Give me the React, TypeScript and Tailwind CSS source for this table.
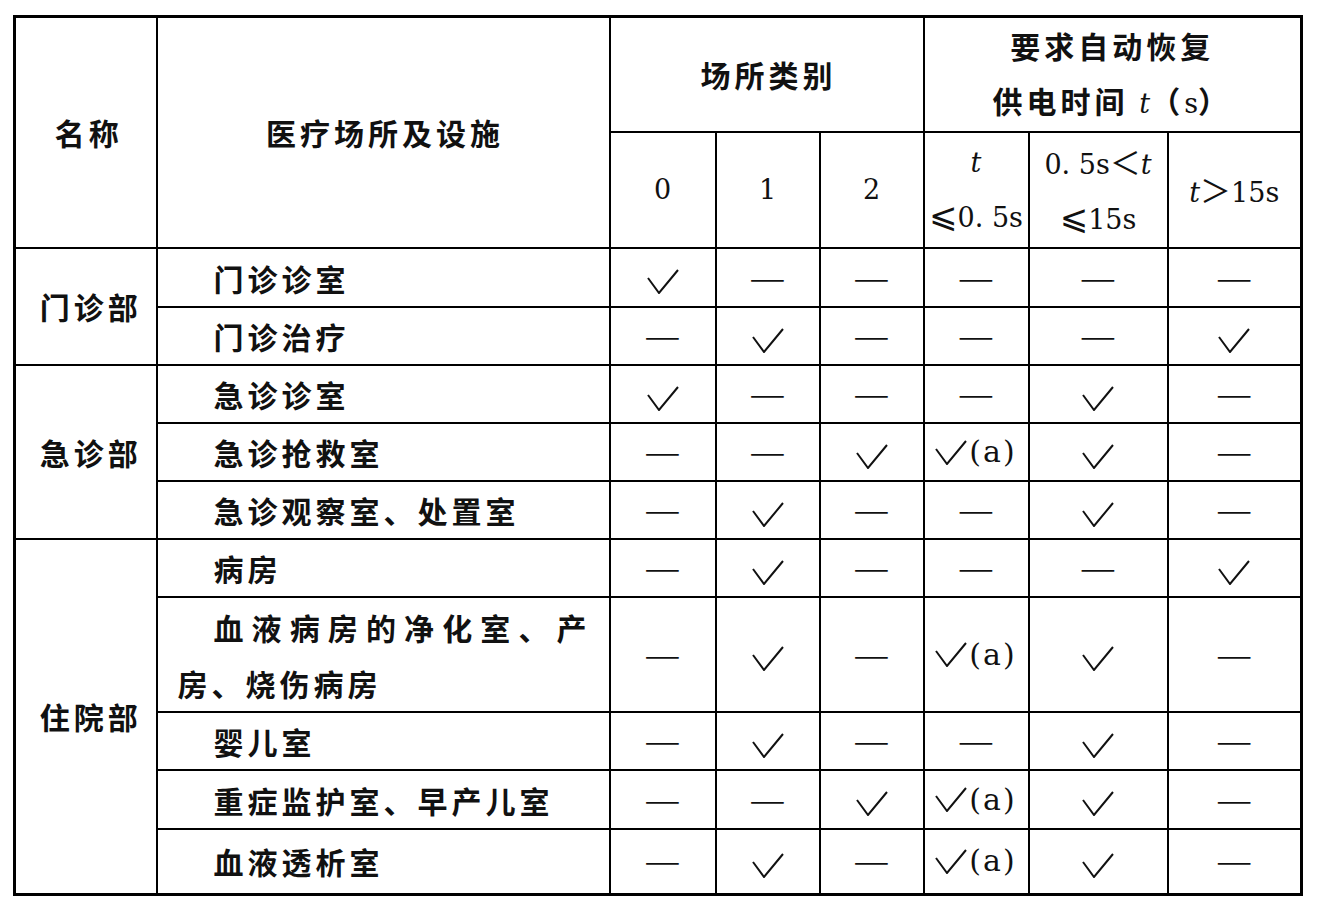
const cjk = "font-['Noto_Sans_CJK_SC',sans-serif]";
const serif = "font-['DejaVu_Serif','DejaVu_Sans','Noto_Sans_CJK_SC',serif]";

type Mark = "c" | "a" | "-";

const rows: { group?: string; span?: number; name: string; v: Mark[]; h: string }[] = [
  { group: "门诊部", span: 2, name: "门诊诊室", v: ["c", "-", "-", "-", "-", "-"], h: "h-[59px]" },
  { name: "门诊治疗", v: ["-", "c", "-", "-", "-", "c"], h: "h-[58px]" },
  { group: "急诊部", span: 3, name: "急诊诊室", v: ["c", "-", "-", "-", "c", "-"], h: "h-[58px]" },
  { name: "急诊抢救室", v: ["-", "-", "c", "a", "c", "-"], h: "h-[58px]" },
  { name: "急诊观察室、处置室", v: ["-", "c", "-", "-", "c", "-"], h: "h-[58px]" },
  { group: "住院部", span: 5, name: "病房", v: ["-", "c", "-", "-", "-", "c"], h: "h-[57px]" },
  { name: "血液病房的净化室、产房、烧伤病房", v: ["-", "c", "-", "a", "c", "-"], h: "h-[115px]" },
  { name: "婴儿室", v: ["-", "c", "-", "-", "c", "-"], h: "h-[57px]" },
  { name: "重症监护室、早产儿室", v: ["-", "-", "c", "a", "c", "-"], h: "h-[59px]" },
  { name: "血液透析室", v: ["-", "c", "-", "a", "c", "-"], h: "h-[65px]" },
];

function Check() {
  return (
    <svg width="32" height="25" viewBox="0 0 32 25" className="inline-block align-middle">
      <polyline points="1,9 12,24 31,1" fill="none" stroke="#111" strokeWidth="2" />
    </svg>
  );
}

function Cell({ m }: { m: Mark }) {
  return (
    <td className="border-2 border-black p-0 text-center align-middle">
      {m === "c" && <Check />}
      {m === "a" && (
        <span className="inline-flex items-center whitespace-nowrap">
          <Check />
          <span className={`${serif} text-[30px] tracking-[2px] leading-none pl-[2px]`}>(a)</span>
        </span>
      )}
      {m === "-" && <span className={`${cjk} text-[41px] leading-none tracking-normal font-light`}>—</span>}
    </td>
  );
}

export default function App() {
  return (
    <div className="min-h-screen bg-white pt-[15px] pl-[13px] text-[#111]">
      <table className={`${cjk} table-fixed border-collapse border-[3px] border-black w-[1287px] text-[30px] tracking-[4px]`}>
        <colgroup>
          <col className="w-[142px]" />
          <col className="w-[453px]" />
          <col className="w-[106px]" />
          <col className="w-[104px]" />
          <col className="w-[104px]" />
          <col className="w-[105px]" />
          <col className="w-[139px]" />
          <col className="w-[134px]" />
        </colgroup>
        <thead>
          <tr className="h-[111px]">
            <th rowSpan={2} className="border-2 border-black p-0 font-bold pl-[6px] text-center">
              名称
            </th>
            <th rowSpan={2} className="border-2 border-black p-0 font-bold pl-[4px] text-center">
              医疗场所及设施
            </th>
            <th colSpan={3} className="border-2 border-black p-0 font-bold pl-[4px] text-center">
              场所类别
            </th>
            <th colSpan={3} className="border-2 border-black p-0 font-bold text-center leading-[55px]">
              要求自动恢复
              <br />
              供电时间 <i className={`${serif} text-[27px] font-normal tracking-normal`}>t</i>（<span className={`${serif} text-[27px] font-normal tracking-normal`}>s</span>）
            </th>
          </tr>
          <tr className={`h-[116px] ${serif} tracking-normal text-[27px]`}>
            <th className="border-2 border-black p-0 font-normal text-center">0</th>
            <th className="border-2 border-black p-0 font-normal text-center">1</th>
            <th className="border-2 border-black p-0 font-normal text-center">2</th>
            <th className="border-2 border-black p-0 font-normal text-center leading-[53px] whitespace-nowrap">
              <i>t</i>
              <br />
              <span className="text-[34px]">⩽</span>0. 5s
            </th>
            <th className="border-2 border-black p-0 font-normal text-center leading-[53px] whitespace-nowrap">
              0. 5s<span className={`${cjk} text-[31px]`}>＜</span><i>t</i>
              <br />
              <span className="text-[34px]">⩽</span>15s
            </th>
            <th className="border-2 border-black p-0 font-normal text-center whitespace-nowrap">
              <i>t</i><span className={`${cjk} text-[31px]`}>＞</span>15s
            </th>
          </tr>
        </thead>
        <tbody>
          {rows.map((r, i) => (
            <tr key={i} className={r.h}>
              {r.group && (
                <td rowSpan={r.span} className="border-2 border-black p-0 font-bold text-center pl-[10px]">
                  {r.group}
                </td>
              )}
              <td className="border-2 border-black py-0 font-bold pl-[20px] pr-[18px] indent-[36px] text-justify leading-[56px]">
                {r.name}
              </td>
              {r.v.map((m, j) => (
                <Cell key={j} m={m} />
              ))}
            </tr>
          ))}
        </tbody>
      </table>
    </div>
  );
}
